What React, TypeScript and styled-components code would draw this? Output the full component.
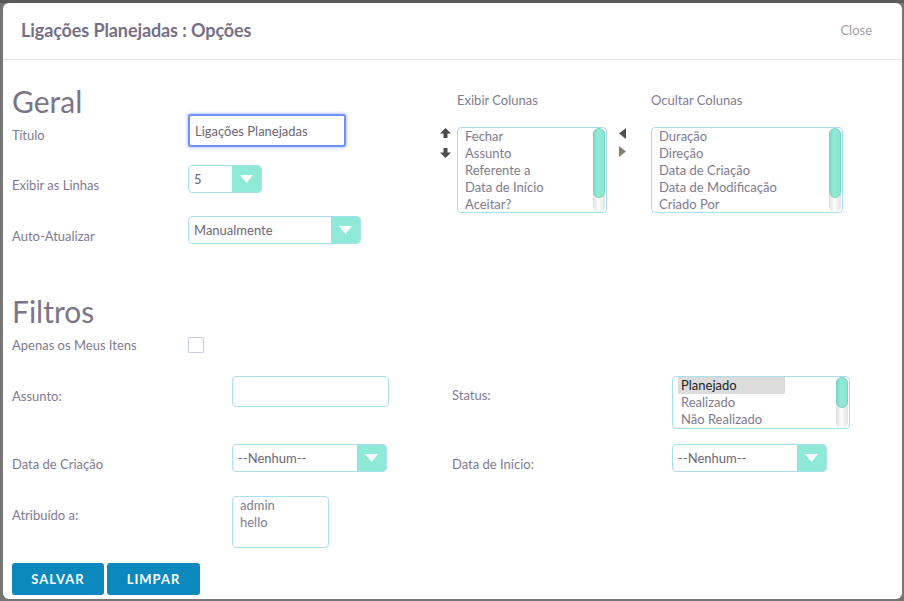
import React from "react";
import styled, { createGlobalStyle, css } from "styled-components";

const GlobalStyle = createGlobalStyle`
  html, body { margin: 0; padding: 0; }
  body {
    background: #6f6f6f;
    font-family: Lato, "Noto Sans", "Liberation Sans", sans-serif;
  }
  * { box-sizing: border-box; }
`;

const Backdrop = styled.div`
  width: 904px;
  height: 601px;
  padding: 3px 2px 2px 3px;
  background: linear-gradient(#5a5a5a 0, #5a5a5a 3px, #757575 3px);
`;

const Modal = styled.div`
  height: 596px;
  background: #fff;
  border-radius: 6px;
  display: flex;
  flex-direction: column;
  overflow: hidden;
`;

const Header = styled.header`
  height: 57px;
  flex: none;
  display: flex;
  align-items: center;
  justify-content: space-between;
  padding: 0 30px 3px 18px;
  border-bottom: 1px solid #e3e3e3;
`;

const Title = styled.h1`
  margin: 0;
  font-size: 18px;
  font-weight: 700;
  color: #776f86;
  letter-spacing: -0.1px;
`;

const CloseLink = styled.span`
  font-size: 13px;
  color: #a3a3a3;
  padding-top: 1px;
`;

const Body = styled.div`
  padding: 0 9px;
  flex: 1;
  display: flex;
  flex-direction: column;
`;

const GeneralSection = styled.section`
  display: flex;
`;

const LeftCol = styled.div`
  width: 428px;
  flex: none;
`;

const SectionHeading = styled.h2<{ $top: number }>`
  margin: ${(p) => p.$top}px 0 0;
  font-size: 30px;
  line-height: 26px;
  font-weight: 400;
  color: #7b748a;
`;

const FieldRow = styled.div<{ $h: number }>`
  display: grid;
  grid-template-columns: 176px 1fr;
  align-items: start;
  height: ${(p) => p.$h}px;
`;

const Label = styled.label<{ $mt?: number }>`
  display: block;
  margin-top: ${(p) => p.$mt ?? 11}px;
  font-size: 13px;
  line-height: 18px;
  color: #817b8f;
`;

const TextInput = styled.input<{ $w: number; $h: number; $focused?: boolean }>`
  width: ${(p) => p.$w}px;
  height: ${(p) => p.$h}px;
  padding: 0 5px;
  font-family: inherit;
  font-size: 13px;
  color: #6b6676;
  background: #fff;
  outline: none;
  border-radius: 4px;
  border: 1px solid #a9def0;
  ${(p) =>
    p.$focused &&
    css`
      border: 2px solid #6f91f7;
      border-radius: 3px;
      box-shadow: 0 0 3px 1px rgba(100, 140, 255, 0.45);
    `}
`;

const SelectBox = styled.div<{ $w: number }>`
  width: ${(p) => p.$w}px;
  height: 28px;
  display: flex;
  align-items: stretch;
  border: 1px solid #a9def0;
  border-radius: 4px;
  background: #fff;
  overflow: hidden;
`;

const SelectValue = styled.span`
  flex: 1;
  display: flex;
  align-items: center;
  padding-left: 5px;
  font-size: 13px;
  color: #6b6676;
`;

const SelectArrow = styled.span`
  width: 29px;
  flex: none;
  background: #8eead6;
  display: flex;
  align-items: center;
  justify-content: center;
`;

const Select = ({ w, value }: { w: number; value: string }) => (
  <SelectBox $w={w}>
    <SelectValue>{value}</SelectValue>
    <SelectArrow>
      <svg width="13" height="8" viewBox="0 0 13 8">
        <path d="M0 0 H13 L6.5 8 Z" fill="#fff" />
      </svg>
    </SelectArrow>
  </SelectBox>
);

const RightCol = styled.div`
  display: grid;
  grid-template-columns: 17px 150px 44px 192px;
  grid-template-rows: 18px auto;
  row-gap: 18px;
  padding-top: 31px;
  align-content: start;
`;

const ColHeading = styled.div<{ $col: number }>`
  grid-column: ${(p) => p.$col};
  font-size: 13px;
  line-height: 18px;
  color: #817b8f;
  white-space: nowrap;
`;

const ArrowStack = styled.div<{ $pad: number; $gap: number }>`
  display: flex;
  flex-direction: column;
  gap: ${(p) => p.$gap}px;
  padding: 1px 0 0 ${(p) => p.$pad}px;
  svg { display: block; }
`;

const ListBox = styled.div<{ $w: number; $h: number }>`
  width: ${(p) => p.$w}px;
  height: ${(p) => p.$h}px;
  border: 1px solid #a9def0;
  border-radius: 4px;
  background: #fff;
  overflow: hidden;
  display: flex;
`;

const OptionList = styled.div<{ $pad: number; $w?: number }>`
  flex: 1;
  padding-left: ${(p) => p.$pad}px;
  & > div {
    width: ${(p) => (p.$w ? `${p.$w}px` : "auto")};
  }
`;

const ScrollTrack = styled.div`
  width: 12px;
  flex: none;
  margin: 0 1px 0 0;
  border-radius: 6px;
  background: linear-gradient(90deg, #dedede, #fdfdfd 45%, #e2e2e2);
`;

const ScrollThumb = styled.div<{ $h: number }>`
  height: ${(p) => p.$h}px;
  border-radius: 6px;
  background: linear-gradient(90deg, #7fdcc6, #90ead6 35%, #8be6d1);
  border: 1px solid #7ad2be;
`;

const Option = styled.div<{ $selected?: boolean; $pad?: number }>`
  font-size: 13px;
  line-height: 17px;
  white-space: nowrap;
  padding-left: ${(p) => p.$pad ?? 0}px;
  color: ${(p) => (p.$selected ? "#222" : "#817b8f")};
  background: ${(p) => (p.$selected ? "#dcdcdc" : "transparent")};
`;

const CheckRow = styled.div`
  display: grid;
  grid-template-columns: 176px 1fr;
  align-items: center;
  margin-top: 12px;
  height: 16px;
`;

const CheckLabel = styled.span`
  font-size: 13px;
  line-height: 18px;
  color: #817b8f;
`;

const Checkbox = styled.span`
  width: 16px;
  height: 16px;
  border: 1px solid #c6cdd9;
  border-radius: 1px;
  background: #fff;
`;

const FilterGrid = styled.div`
  display: grid;
  grid-template-columns: 220px 220px 220px 1fr;
  grid-template-rows: 68px 52px 52px;
  align-items: start;
  margin-top: 24px;
`;

const ButtonBar = styled.div`
  display: flex;
  gap: 3px;
  margin-top: 15px;
`;

const Button = styled.button<{ $w: number }>`
  width: ${(p) => p.$w}px;
  height: 32px;
  border: none;
  border-radius: 3px;
  background: #0b89bf;
  color: #fff;
  font-family: inherit;
  font-size: 13px;
  font-weight: 700;
  letter-spacing: 1px;
  padding: 0;
`;

const UpArrow = () => (
  <svg width="11" height="10" viewBox="0 0 11 10">
    <path d="M5.5 0 L11 5.5 H7.5 V10 H3.5 V5.5 H0 Z" fill="#4b4b4b" />
  </svg>
);
const DownArrow = () => (
  <svg width="11" height="10" viewBox="0 0 11 10">
    <path d="M5.5 10 L11 4.5 H7.5 V0 H3.5 V4.5 H0 Z" fill="#4b4b4b" />
  </svg>
);
const LeftTri = () => (
  <svg width="7" height="11" viewBox="0 0 7 11">
    <path d="M7 0 V11 L0 5.5 Z" fill="#4f4f4f" />
  </svg>
);
const RightTri = () => (
  <svg width="7" height="11" viewBox="0 0 7 11">
    <path d="M0 0 V11 L7 5.5 Z" fill="#7c8272" />
  </svg>
);

const shown = ["Fechar", "Assunto", "Referente a", "Data de Início", "Aceitar?"];
const hidden = ["Duração", "Direção", "Data de Criação", "Data de Modificação", "Criado Por"];
const statuses = ["Planejado", "Realizado", "Não Realizado"];

export default function App() {
  return (
    <>
      <GlobalStyle />
      <Backdrop>
        <Modal>
          <Header>
            <Title>Ligações Planejadas : Opções</Title>
            <CloseLink>Close</CloseLink>
          </Header>
          <Body>
            <GeneralSection>
              <LeftCol>
                <SectionHeading $top={28}>Geral</SectionHeading>
                <FieldRow $h={51}>
                  <Label $mt={12}>Título</Label>
                  <TextInput $w={158} $h={33} $focused defaultValue="Ligações Planejadas" />
                </FieldRow>
                <FieldRow $h={51}>
                  <Label>Exibir as Linhas</Label>
                  <Select w={74} value="5" />
                </FieldRow>
                <FieldRow $h={28}>
                  <Label>Auto-Atualizar</Label>
                  <Select w={173} value="Manualmente" />
                </FieldRow>
              </LeftCol>
              <RightCol>
                <ColHeading $col={2}>Exibir Colunas</ColHeading>
                <ColHeading $col={4}>Ocultar Colunas</ColHeading>
                <ArrowStack $pad={0} $gap={10}>
                  <UpArrow />
                  <DownArrow />
                </ArrowStack>
                <ListBox $w={150} $h={86}>
                  <OptionList $pad={7}>
                    {shown.map((s) => (
                      <Option key={s}>{s}</Option>
                    ))}
                  </OptionList>
                  <ScrollTrack>
                    <ScrollThumb $h={70} />
                  </ScrollTrack>
                </ListBox>
                <ArrowStack $pad={12} $gap={7}>
                  <LeftTri />
                  <RightTri />
                </ArrowStack>
                <ListBox $w={192} $h={86}>
                  <OptionList $pad={7}>
                    {hidden.map((s) => (
                      <Option key={s}>{s}</Option>
                    ))}
                  </OptionList>
                  <ScrollTrack>
                    <ScrollThumb $h={70} />
                  </ScrollTrack>
                </ListBox>
              </RightCol>
            </GeneralSection>

            <SectionHeading $top={54}>Filtros</SectionHeading>
            <CheckRow>
              <CheckLabel>Apenas os Meus Itens</CheckLabel>
              <Checkbox />
            </CheckRow>

            <FilterGrid>
              <Label>Assunto:</Label>
              <TextInput $w={157} $h={31} />
              <Label $mt={10}>Status:</Label>
              <ListBox $w={178} $h={53}>
                <OptionList $pad={5} $w={107}>
                  {statuses.map((s, i) => (
                    <Option key={s} $pad={3} $selected={i === 0}>
                      {s}
                    </Option>
                  ))}
                </OptionList>
                <ScrollTrack>
                  <ScrollThumb $h={31} />
                </ScrollTrack>
              </ListBox>

              <Label>Data de Criação</Label>
              <Select w={155} value="--Nenhum--" />
              <Label>Data de Início:</Label>
              <Select w={155} value="--Nenhum--" />

              <Label $mt={10}>Atribuído a:</Label>
              <ListBox $w={97} $h={52}>
                <OptionList $pad={7}>
                  <Option>admin</Option>
                  <Option>hello</Option>
                </OptionList>
              </ListBox>
            </FilterGrid>

            <ButtonBar>
              <Button $w={92}>SALVAR</Button>
              <Button $w={93}>LIMPAR</Button>
            </ButtonBar>
          </Body>
        </Modal>
      </Backdrop>
    </>
  );
}
